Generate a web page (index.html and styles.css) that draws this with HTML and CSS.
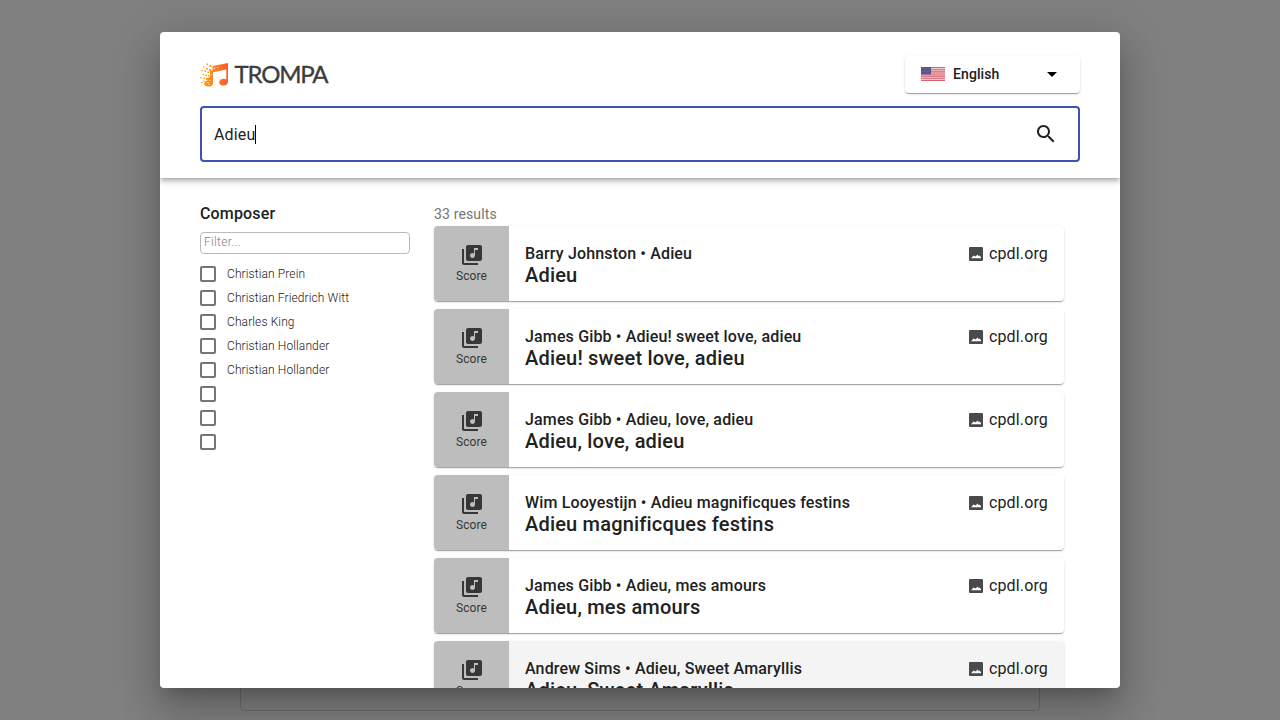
FILE: index.html
```html
<!DOCTYPE html>
<html lang="en">
<head>
<meta charset="utf-8">
<title>TROMPA</title>
<link rel="stylesheet" href="styles.css">
</head>
<body>
<svg class="defs" aria-hidden="true">
  <symbol id="score" viewBox="0 0 24 24"><path d="M20 2H8c-1.100 0-2 .9-2 2v12c0 1.100.9 2 2 2h12c1.100 0 2-.9 2-2V4c0-1.100-.9-2-2-2zm-2 5h-3v5.500c0 1.380-1.120 2.500-2.500 2.500S10 13.880 10 12.500s1.120-2.500 2.500-2.500c.57 0 1.080.19 1.500.51V5h4v2zM4 6H2v14c0 1.100.9 2 2 2h14v-2H4V6z"/></symbol>
  <symbol id="image" viewBox="0 0 14 14"><path fill-rule="evenodd" d="M1.300 0h11.400C13.500 0 14 .6 14 1.300v11.400c0 .8-.6 1.300-1.300 1.300H1.300C.5 14 0 13.400 0 12.700V1.300C0 .5.6 0 1.300 0zM2 11.300h10V10L10.200 8.600 9.400 9 8.600 7.400 6.600 9.600 4.600 8.500z"/></symbol>
</svg>
<div class="backdrop"><div class="page-card"></div></div>
<main class="dialog">
  <header class="header">
    <div class="topline">
      <svg class="logo" viewBox="0 0 130 26">
        <defs><linearGradient id="flame" gradientUnits="userSpaceOnUse" x1="4" x2="28" y1="0" y2="0"><stop offset="0" stop-color="#ff960c"/><stop offset=".45" stop-color="#fb8420"/><stop offset="1" stop-color="#fb5a30"/></linearGradient></defs>
        <path fill="url(#flame)" d="M12.500 4 28 1v18.500c0 2.600-2 4-4.400 4-2.500 0-4.400-1.100-4.400-3.100 0-2.200 1.900-3.700 4.400-3.700 1 0 2 .3 2.700.7V7.600L13 10.200v11.200c0 2-1.900 3.100-4.600 3.100-2.600 0-4.200-1.100-4.200-3 0-1.500 1.200-2.500 3-2.800L8 16l2-1V8.500h2.500z"/>
        <path fill="#ff9d14" d="M6.500 1.500H8V3H6.500zM9.500 3h2v2h-2zM3 4.500h1.300v1.300H3zM6 6h2v1.500H6zM9 7h2v2H9zM1.500 8h1.300v1.200H1.500zM4.500 8.500H6V10H4.500zM7.500 9.500H9V11H7.500zM2.500 12H4v1.300H2.500zM5.500 12.500H7V14H5.500zM8 13h1.500v1.500H8zM.3 15h1.500v1.200H.3zM3.500 15.500H5V17H3.500zM6 16h2v2H6zM1 20h1.500v1.200H1zM3 18.500h1.500v1.300H3z"/>
        <path fill="#fff" d="M14 5.700h1v1h-1zM17.500 5h.8v1h-.8zM7.500 20h1.100v1.300H7.500zM9.500 18h.9v.9h-.9zM10.800 12h.9v.9h-.9zM8.500 22h1v.8h-1z"/>
        <text class="wordmark" x="34.500" y="21" textLength="94" lengthAdjust="spacing">TROMPA</text>
      </svg>
      <div class="language">
        <svg class="flag" viewBox="0 0 24 14"><path fill="#f2ccd1" d="M0 0h24v14H0z"/><path fill="#d9606f" d="M0 0h24v1.080H0zM0 2.150h24v1.080H0zM0 4.300h24v1.080H0zM0 6.460h24v1.080H0zM0 8.600h24v1.080H0zM0 10.770h24v1.080H0zM0 12.920h24V14H0z"/><path fill="#53538b" d="M0 0h10v7.540H0z"/><path stroke="#8686ae" stroke-width=".6" stroke-dasharray=".7 1" d="M1 1.500h8M1.800 3h7M1 4.500h8M1.800 6h7"/></svg>
        <span>English</span>
        <svg class="arrow" viewBox="0 0 24 24"><path d="M7 10l5 5 5-5z"/></svg>
      </div>
    </div>
    <div class="search">
      <span class="query">Adieu</span>
      <svg class="magnifier" viewBox="0 0 24 24"><path d="M15.500 14h-.79l-.28-.27C15.410 12.590 16 11.110 16 9.500 16 5.910 13.090 3 9.500 3S3 5.910 3 9.500 5.910 16 9.500 16c1.610 0 3.090-.59 4.230-1.570l.27.28v.79l5 4.990L20.490 19l-4.990-5zm-6 0C7.010 14 5 11.990 5 9.500S7.010 5 9.500 5 14 7.010 14 9.500 11.990 14 9.500 14z"/></svg>
    </div>
  </header>
  <div class="content">
    <aside class="facets">
      <h2>Composer</h2>
      <div class="filter">Filter...</div>
      <ul>
        <li><i></i>Christian Prein</li>
        <li><i></i>Christian Friedrich Witt</li>
        <li><i></i>Charles King</li>
        <li><i></i>Christian Hollander</li>
        <li><i></i>Christian Hollander</li>
        <li><i></i></li>
        <li><i></i></li>
        <li><i></i></li>
      </ul>
    </aside>
    <section class="results">
      <p class="count">33 results</p>
      <article class="card"><div class="thumb"><svg><use href="#score"/></svg>Score</div><div class="info"><p>Barry Johnston • Adieu</p><h3>Adieu</h3></div><div class="source"><svg><use href="#image"/></svg>cpdl.org</div></article>
      <article class="card"><div class="thumb"><svg><use href="#score"/></svg>Score</div><div class="info"><p>James Gibb • Adieu! sweet love, adieu</p><h3>Adieu! sweet love, adieu</h3></div><div class="source"><svg><use href="#image"/></svg>cpdl.org</div></article>
      <article class="card"><div class="thumb"><svg><use href="#score"/></svg>Score</div><div class="info"><p>James Gibb • Adieu, love, adieu</p><h3>Adieu, love, adieu</h3></div><div class="source"><svg><use href="#image"/></svg>cpdl.org</div></article>
      <article class="card"><div class="thumb"><svg><use href="#score"/></svg>Score</div><div class="info"><p>Wim Looyestijn • Adieu magnificques festins</p><h3>Adieu magnificques festins</h3></div><div class="source"><svg><use href="#image"/></svg>cpdl.org</div></article>
      <article class="card"><div class="thumb"><svg><use href="#score"/></svg>Score</div><div class="info"><p>James Gibb • Adieu, mes amours</p><h3>Adieu, mes amours</h3></div><div class="source"><svg><use href="#image"/></svg>cpdl.org</div></article>
      <article class="card hovered"><div class="thumb"><svg><use href="#score"/></svg>Score</div><div class="info"><p>Andrew Sims • Adieu, Sweet Amaryllis</p><h3>Adieu, Sweet Amaryllis</h3></div><div class="source"><svg><use href="#image"/></svg>cpdl.org</div></article>
    </section>
  </div>
</main>
</body>
</html>
```
FILE: styles.css
```css
* { box-sizing: border-box; margin: 0; padding: 0; }
body { height: 720px; overflow: hidden; padding: 32px 160px; background: #808080; color: #212121; font-family: Roboto, sans-serif; }
svg { display: block; flex: none; }
.defs { position: absolute; width: 0; height: 0; }
.backdrop { position: absolute; inset: 0; padding: 200px 240px 9px; }
.page-card { height: 100%; border: 1px solid #6c6c6c; border-radius: 4px; }
.dialog { position: relative; display: flex; flex-direction: column; height: 656px; overflow: hidden; background: #fff; border-radius: 4px; box-shadow: 0 11px 15px -7px rgba(0,0,0,.2), 0 24px 38px 3px rgba(0,0,0,.14), 0 9px 46px 8px rgba(0,0,0,.12); }
.header { flex: none; height: 146px; padding: 24px 40px 16px; box-shadow: 0 2px 4px -1px rgba(0,0,0,.2), 0 4px 5px rgba(0,0,0,.14), 0 1px 10px rgba(0,0,0,.12); }
.topline { display: flex; justify-content: space-between; height: 37px; }
.logo { width: 130px; height: 26px; margin-top: 6px; overflow: visible; }
.wordmark { font: 400 24px Lato, sans-serif; fill: #3c3c3e; stroke: #3c3c3e; stroke-width: .35px; }
.language, .card { border-radius: 4px; box-shadow: 0 2px 1px -1px rgba(0,0,0,.2), 0 1px 1px rgba(0,0,0,.14), 0 1px 3px rgba(0,0,0,.12); }
.language { display: flex; align-items: center; width: 175px; height: 37px; padding: 0 16px 1px; font-weight: 500; font-size: 14px; letter-spacing: .1px; }
.flag { width: 24px; height: 14px; margin-right: 8px; }
.arrow { width: 24px; height: 24px; margin-left: auto; }
.search { display: flex; align-items: center; justify-content: space-between; height: 56px; margin-top: 13px; padding: 0 20px 0 12px; border: 2px solid #3f51b5; border-radius: 4px; font-size: 16px; letter-spacing: .15px; }
.query { line-height: 19px; border-right: 1px solid #000; }
.magnifier { width: 24px; height: 24px; fill: #212121; }
.content { display: flex; gap: 24px; padding: 24px 56px 0 40px; }
.facets { width: 210px; }
.facets h2 { font-size: 16px; font-weight: 500; line-height: 24px; letter-spacing: .15px; }
.filter { height: 22px; margin: 6px 0 8px; padding-left: 3px; border: 1px solid #bababa; border-radius: 4px; font-size: 12px; line-height: 18px; color: #858585; font-weight: 300; letter-spacing: .3px; }
.facets li { display: flex; align-items: center; gap: 11px; height: 24px; font-size: 12px; font-weight: 300; letter-spacing: .11px; list-style: none; }
.facets i { width: 16px; height: 16px; border: 2px solid #757575; border-radius: 2px; }
.results { width: 630px; }
.count { height: 24px; font-size: 14px; line-height: 24px; letter-spacing: .15px; color: #757575; }
.card { display: flex; align-items: flex-start; width: 630px; height: 75px; margin-bottom: 8px; overflow: hidden; background: #fff; }
.hovered { background: #f4f4f4; }
.thumb { width: 75px; height: 75px; padding-top: 17px; background: #bdbdbd; text-align: center; color: #373737; font-size: 12px; line-height: 19px; letter-spacing: .1px; }
.thumb svg { width: 24px; height: 24px; margin: 0 auto; fill: #373737; }
.info { flex: 1; padding: 17px 16px 0; }
.info p { font-size: 16px; font-weight: 500; line-height: 21px; letter-spacing: .15px; }
.info h3 { font-size: 20px; font-weight: 500; line-height: 22px; letter-spacing: .19px; }
.source { display: flex; align-items: center; gap: 6px; height: 24px; margin: 15px 16px 0 0; font-size: 16px; letter-spacing: .15px; }
.source svg { width: 14px; height: 14px; fill: #4a4a4a; margin-top: 2px; }
```
